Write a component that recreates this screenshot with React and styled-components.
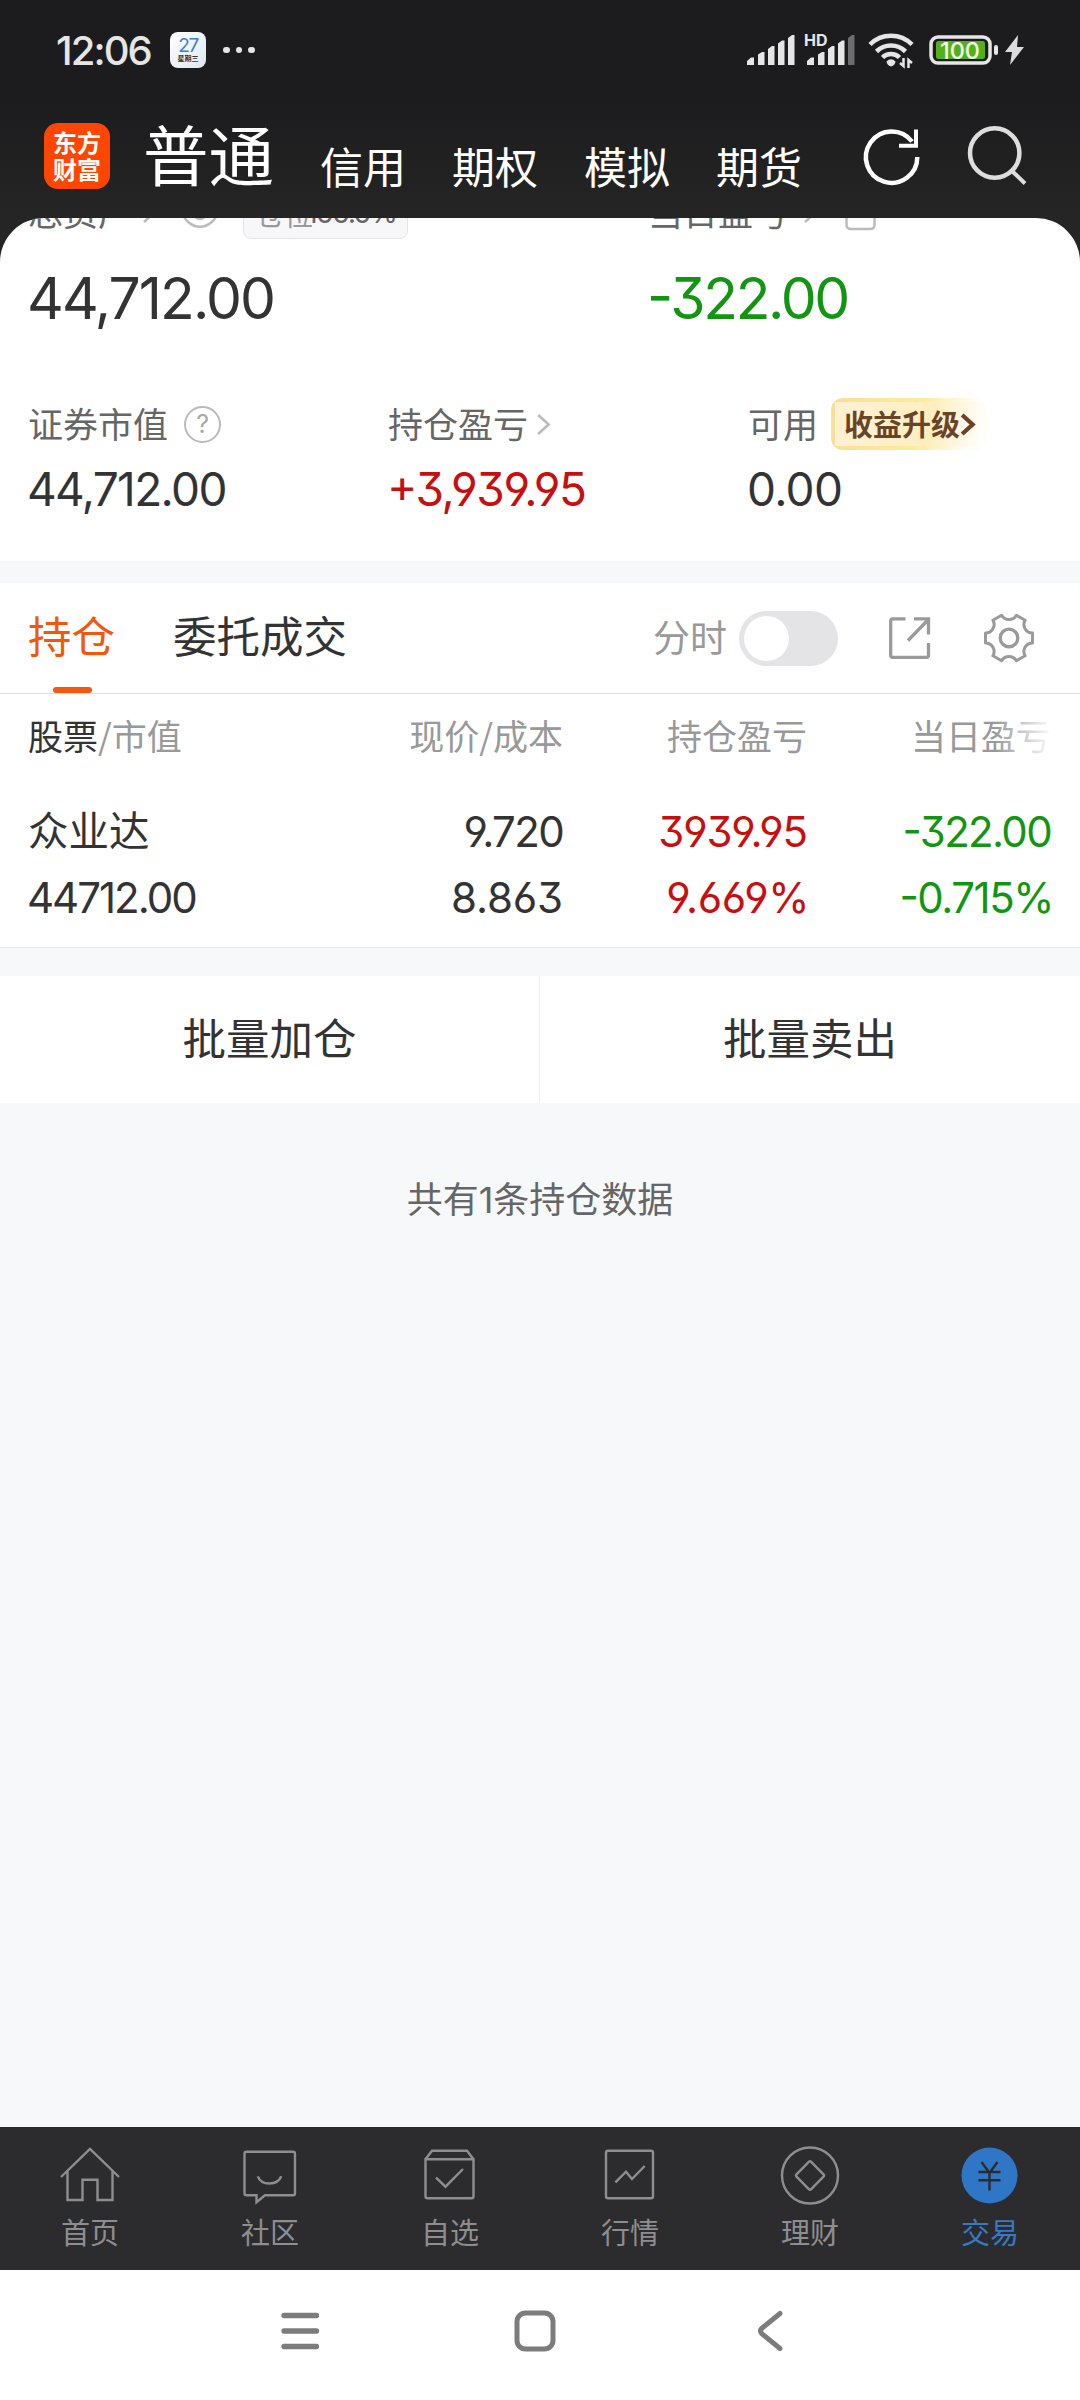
import React from "react";
import styled, { createGlobalStyle } from "styled-components";

const RED = "#c80f0f";
const GREEN = "#129612";

const GlobalStyle = createGlobalStyle`
  * {
    box-sizing: border-box;
  }
  body {
    margin: 0;
    background: #f7f8fa;
    font-family: "Noto Sans CJK SC", sans-serif;
    color: #333;
  }
  svg {
    display: block;
    flex: none;
    overflow: visible;
  }
`;

const StatusIcons = () => (
  <StatusRight>
    <svg width="48" height="36" fill="#e6e6e6">
      <path d="M0 33v-4l4-3.500h3v7.500zM11 33V22.500l4-2.500h2.500v13zM21 33V17l4-3h2.500v19zM31 33V11.500l4-3h2.500V33zM41 33V6l4-3h2.500v30z" />
    </svg>
    <svg width="48" height="36" fill="#e6e6e6">
      <path d="M0 33v-4l4-3.500h3v7.500zM11 33V22.500l4-2.500h2.500v13zM21 33V17l4-3h2.500v19zM31 33V11.500l4-3h2.500V33z" />
      <path fill="#6d6d6e" d="M41 33V6l4-3h2.500v30z" />
      <text x="-3" y="13.500" fontFamily="Inter" fontSize="16" fontWeight="700">
        HD
      </text>
    </svg>
    <svg width="46" height="36" fill="none" stroke="#e6e6e6" strokeWidth="4.600">
      <path d="M2 12.500a29.500 29.500 0 0 1 42 0M8.500 19.500a20.500 20.500 0 0 1 29 0M14.500 25.500a12 12 0 0 1 17 0" />
      <path d="M18.500 29.500q4.500-4.500 9 0q-.5 4-4.500 5q-4-1-4.500-5z" fill="#e6e6e6" stroke="none" />
      <path d="M35.500 26v8l-3.500-3M40.500 36v-8l3.500 3" strokeWidth="2.500" />
    </svg>
    <svg width="70" height="32">
      <rect x="2" y="3" width="59" height="26" rx="7" fill="none" stroke="#e6e6e6" strokeWidth="3.500" />
      <rect x="7" y="7" width="49" height="18" rx="2.500" fill="#52b01c" />
      <text x="31" y="24.500" fill="#f2fbe8" fontFamily="Inter" fontSize="23.500" fontWeight="500" textAnchor="middle" textLength="40">
        100
      </text>
      <rect x="65" y="11" width="4" height="10" rx="2" fill="#e6e6e6" />
    </svg>
    <svg width="19" height="32" fill="#dcdcdc">
      <path d="M13 1L0 18h7L5 31L19 13h-7z" />
    </svg>
  </StatusRight>
);

const ArrowRight = ({ color = "#bbb", size = 20, width = 2.5 }) => (
  <svg width={size * 0.8} height={size} viewBox="0 0 16 20" fill="none" stroke={color} strokeWidth={width}>
    <path d="M3 1l10 9l-10 9" />
  </svg>
);

const navItems = [
  {
    title: "首页",
    icon: <path d="M3 34L32 6l29 28M9.500 28v29h15V36.700h15V57h15V28" />,
  },
  {
    title: "社区",
    icon: (
      <>
        <path d="M8.500 8.700h46.500a2 2 0 0 1 2 2v39.500a2 2 0 0 1-2 2H27l-8.500 7v-7H8.500a2 2 0 0 1-2-2V10.700a2 2 0 0 1 2-2z" />
        <path d="M19.800 33.300c3.500 9.500 19.700 9.500 23.500 0" />
      </>
    ),
  },
  {
    title: "自选",
    icon: (
      <>
        <path d="M7.500 16.300L14 7.700h35l6.500 8.600M7.500 16.300h48v37a2 2 0 0 1-2 2h-44a2 2 0 0 1-2-2z" />
        <path d="M18 34.700l9.500 9L45 26" />
      </>
    ),
  },
  {
    title: "行情",
    icon: (
      <>
        <rect x="8" y="7.800" width="47" height="47.500" rx="2" />
        <path d="M17.400 39.300L28 28.700l6 7.300L46.700 23" />
      </>
    ),
  },
  {
    title: "理财",
    icon: (
      <>
        <circle cx="32" cy="32.500" r="28" />
        <path d="M30.800 18.800q1.200-1.200 2.400 0l12.300 12.500q1.200 1.200 0 2.400l-12.300 12.500q-1.200 1.200-2.400 0L18.500 33.700q-1.200-1.200 0-2.400z" />
      </>
    ),
  },
  {
    title: "交易",
    active: true,
    icon: (
      <>
        <circle cx="31.500" cy="32.500" r="28" fill="#2f76c6" stroke="none" />
        <path d="M23.500 19l8 11l8-11M20.500 29h22M20.500 37.300h22M31.500 29v18.500" stroke="#2c2c2e" />
      </>
    ),
  },
];

const App = () => {
  return (
    <Page>
      <GlobalStyle />
      <Top>
        <StatusBar>
          <Time>12:06</Time>
          <Calendar>
            <CalendarDay>27</CalendarDay>
            <CalendarWeek>星期三</CalendarWeek>
          </Calendar>
          <Dots>
            <i />
            <i />
            <i />
          </Dots>
          <StatusIcons />
        </StatusBar>
        <Header>
          <Logo>
            <span>东方</span>
            <span>财富</span>
          </Logo>
          <AccountTab $active>普通</AccountTab>
          {["信用", "期权", "模拟", "期货"].map((name) => (
            <AccountTab key={name}>{name}</AccountTab>
          ))}
          <HeaderActions>
            <svg width="58" height="60" fill="none" stroke="#fff" strokeWidth="4.500">
              <path d="M54.300 31A25.700 25.700 0 1 1 49 15.500" />
              <path d="M53 3.500v18M36 19.800h19" strokeWidth="4" />
            </svg>
            <svg width="60" height="60" fill="none" stroke="#dedede" strokeWidth="4.500">
              <circle cx="28.700" cy="27" r="24.700" />
              <path d="M45.500 44.500l13.500 13" strokeWidth="4" />
            </svg>
          </HeaderActions>
        </Header>
      </Top>

      <CardBackdrop>
        <AccountCard>
          <TitleRow>
            <TitleCell>
              <Label>总资产</Label>
              <TitleArrow>
                <ArrowRight />
              </TitleArrow>
              <svg width="36" height="28" fill="none" stroke="#bbb" strokeWidth="2.500">
                <path d="M0 14C5-5 31-5 36 14C31 35 5 35 0 14z" />
                <circle cx="18" cy="16" r="6" />
              </svg>
              <PositionTag>
                <span>仓位</span>
                <TagNumber>100.0%</TagNumber>
              </PositionTag>
            </TitleCell>
            <TitleCell>
              <Label>当日盈亏</Label>
              <ProfitArrow>
                <ArrowRight />
              </ProfitArrow>
              <svg width="31" height="36" fill="none" stroke="#bbb" strokeWidth="2.500">
                <rect x="1.500" y="8" width="28" height="28" rx="4" />
              </svg>
            </TitleCell>
          </TitleRow>
          <TotalRow>
            <Total $track={-0.034}>44,712.00</Total>
            <Total $track={-0.041} $color={GREEN}>
              -322.00
            </Total>
          </TotalRow>
          <Stats>
            <Stat>
              <StatTitle>
                <Label>证券市值</Label>
                <Help>?</Help>
              </StatTitle>
              <StatValue $track={-0.035}>44,712.00</StatValue>
            </Stat>
            <Stat>
              <StatTitle>
                <Label>持仓盈亏</Label>
                <StatArrow>
                  <ArrowRight size={21} />
                </StatArrow>
              </StatTitle>
              <StatValue $track={-0.031} $color={RED}>
                +3,939.95
              </StatValue>
            </Stat>
            <Stat>
              <StatTitle>
                <Label>可用</Label>
                <Upgrade>
                  收益升级
                  <ArrowRight color="#6b4428" size={21} width={4} />
                </Upgrade>
              </StatTitle>
              <StatValue $track={-0.015}>0.00</StatValue>
            </Stat>
          </Stats>
        </AccountCard>
      </CardBackdrop>

      <TabBar>
        <Tab $active>持仓</Tab>
        <Tab>委托成交</Tab>
        <TabTools>
          <ToolLabel>分时</ToolLabel>
          <Toggle>
            <Knob />
          </Toggle>
          <svg width="42" height="42" fill="none" stroke="#9a9a9a" strokeWidth="3.300">
            <path d="M16.500 1.800H3.700a2 2 0 0 0-2 2v34.500a2 2 0 0 0 2 2h33.800a2 2 0 0 0 2-2V26M25 1.800h14.500V17.500M19 23.500L39 3" />
          </svg>
          <svg width="50" height="50" fill="none" stroke="#9a9a9a" strokeWidth="3" strokeLinejoin="round">
            <path d="M48.500 20v10A8.500 8.500 0 0 0 41.100 42.800L32.400 47.800A8.500 8.500 0 0 0 17.600 47.800L8.900 42.800A8.500 8.500 0 0 0 1.500 30V20A8.500 8.500 0 0 0 8.900 7.200L17.600 2.200A8.500 8.500 0 0 0 32.400 2.200L41.100 7.200A8.500 8.500 0 0 0 48.500 20z" />
            <circle cx="25" cy="25" r="8.800" strokeWidth="3.300" />
          </svg>
        </TabTools>
      </TabBar>

      <Holdings>
        <HeadRow>
          <HeadCell>
            <b>股票</b>/市值
          </HeadCell>
          <HeadCell>现价/成本</HeadCell>
          <HeadCell>持仓盈亏</HeadCell>
          <HeadCell $fade>当日盈亏</HeadCell>
        </HeadRow>
        <Row>
          <StockName>众业达</StockName>
          <Cell $track={-0.039}>9.720</Cell>
          <Cell $color={RED}>3939.95</Cell>
          <Cell $track={-0.04} $color={GREEN}>
            -322.00
          </Cell>
        </Row>
        <Row>
          <Cell $track={-0.048}>44712.00</Cell>
          <Cell $track={-0.003}>8.863</Cell>
          <Cell $percent $track={-0.01} $color={RED}>
            9.669%
          </Cell>
          <Cell $percent $track={-0.035} $color={GREEN}>
            -0.715%
          </Cell>
        </Row>
      </Holdings>

      <BatchRow>
        <BatchButton>批量加仓</BatchButton>
        <BatchButton>批量卖出</BatchButton>
      </BatchRow>
      <Summary>
        共有<span>1</span>条持仓数据
      </Summary>

      <BottomNav>
        {navItems.map((item) => (
          <NavItem key={item.title} $active={item.active}>
            <svg width="64" height="64" fill="none" stroke="#8e8e91" strokeWidth="2.400">
              {item.icon}
            </svg>
            {item.title}
          </NavItem>
        ))}
      </BottomNav>
      <SystemBar>
        <svg width="40" height="40" stroke="#7c7c7c" strokeWidth="5.300" strokeLinecap="round">
          <path d="M4 4.500h32.500M4 20h32.500M4 35.500h32.500" />
        </svg>
        <svg width="42" height="42" fill="none" stroke="#7c7c7c" strokeWidth="5">
          <rect x="3" y="3" width="36" height="36" rx="8.500" />
        </svg>
        <svg width="26" height="42" fill="none" stroke="#7c7c7c" strokeWidth="5" strokeLinecap="round">
          <path d="M23 3.500L4.800 18.300q-2.500 2.700 0 5.400L23 38.500" />
        </svg>
      </SystemBar>
    </Page>
  );
};

const Page = styled.div`
  width: 1080px;
  height: 2400px;
  display: flex;
  flex-direction: column;
  overflow: hidden;
`;

const Top = styled.div`
  height: 218px;
  background: linear-gradient(#1c1c1e 45%, #252525);
`;

const StatusBar = styled.div`
  height: 100px;
  padding: 0 56px;
  display: flex;
  align-items: center;
`;

const Time = styled.div`
  width: 114px;
  font-family: Inter, sans-serif;
  font-size: 40px;
  font-weight: 500;
  letter-spacing: -1.9px;
  color: #e6e6e6;
`;

const Calendar = styled.div`
  width: 36px;
  height: 36px;
  border-radius: 8px;
  background: linear-gradient(135deg, #fff, #dde8f3);
  display: flex;
  flex-direction: column;
  align-items: center;
  padding-top: 5px;
`;

const CalendarDay = styled.div`
  font-family: Inter, sans-serif;
  font-size: 19px;
  line-height: 18px;
  letter-spacing: -1.5px;
  color: #3c80cc;
`;

const CalendarWeek = styled.div`
  font-size: 7px;
  line-height: 7px;
  font-weight: 700;
  color: #333;
`;

const Dots = styled.div`
  display: flex;
  gap: 6px;
  margin-left: 17px;
  i {
    width: 6.500px;
    height: 6.500px;
    border-radius: 50%;
    background: #e6e6e6;
  }
`;

const StatusRight = styled.div`
  margin-left: auto;
  display: flex;
  align-items: center;
  svg:nth-child(2) {
    margin-left: 12px;
  }
  svg:nth-child(3) {
    margin-left: 13px;
  }
  svg:nth-child(4) {
    margin-left: 15px;
  }
  svg:nth-child(5) {
    margin-left: 6px;
  }
`;

const Header = styled.div`
  height: 118px;
  padding: 0 54px 6px 44px;
  display: flex;
  align-items: center;
`;

const Logo = styled.div`
  width: 66px;
  height: 66px;
  border-radius: 14px;
  margin-right: -13px;
  padding-top: 5px;
  background: #ff4600;
  color: #fff;
  font-size: 24px;
  font-weight: 700;
  line-height: 27px;
  display: flex;
  flex-direction: column;
  align-items: center;
`;

const AccountTab = styled.div`
  color: #fff;
  font-size: ${(p) => (p.$active ? "65.5px" : "43px")};
  line-height: 70px;
  margin-left: 46px;
  margin-top: ${(p) => (p.$active ? "-6px" : "17px")};
  white-space: nowrap;
`;

const HeaderActions = styled.div`
  margin-left: auto;
  display: flex;
  gap: 45px;
`;

const CardBackdrop = styled.div`
  height: 365px;
  background: linear-gradient(#252525 60px, #f7f8fa 60px);
`;

const AccountCard = styled.div`
  height: 343px;
  border-radius: 44px 44px 0 0;
  background: #fff;
  overflow: hidden;
  display: flex;
  flex-direction: column;
  padding-left: 28px;
`;

// scrolled partly under the header
const TitleRow = styled.div`
  flex: none;
  height: 50px;
  margin-top: -29px;
  display: grid;
  grid-template-columns: 620px 1fr;
`;

const TitleCell = styled.div`
  height: 50px;
  display: flex;
  align-items: center;
  padding-bottom: 7px;
`;

const Label = styled.div`
  font-size: 35px;
  line-height: 43px;
  color: #666;
  white-space: nowrap;
`;

const TitleArrow = styled.div`
  margin: 4px 25px 0 8px;
`;

const ProfitArrow = styled.div`
  margin: 4px 27px 0 14px;
`;

const PositionTag = styled.div`
  width: 165px;
  height: 46px;
  margin: 0 0 -7px 25px;
  align-self: flex-end;
  border: 1px solid #e4e4e8;
  border-radius: 8px;
  background: #f7f7fa;
  color: #999;
  display: flex;
  justify-content: center;
  align-items: center;
  font-size: 29px;
  padding-bottom: 6px;
`;

const TagNumber = styled.span`
  font-family: Inter, sans-serif;
  font-size: 29px;
  line-height: 34px;
  letter-spacing: -2px;
  color: #666;
  margin-left: -7px;
`;

const TotalRow = styled.div`
  margin-top: 30px;
  display: grid;
  grid-template-columns: 620px 1fr;
`;

const Digits = styled.div`
  font-family: Inter, sans-serif;
  font-feature-settings: "cv03", "cv04", "cv09", "case";
  letter-spacing: ${(p) => p.$track ?? -0.027}em;
  color: ${(p) => p.$color || "#333"};
  white-space: nowrap;
`;

const Total = styled(Digits)`
  margin-left: -1px;
  font-size: 57px;
  line-height: 60px;
`;

const Stats = styled.div`
  margin-top: 66px;
  display: flex;
`;

const Stat = styled.div`
  flex: 0 0 360px;
`;

const StatTitle = styled.div`
  height: 54px;
  display: flex;
  align-items: center;
`;

const StatValue = styled(Digits)`
  margin-top: 10px;
  margin-left: -1px;
  font-size: 46px;
  line-height: 61px;
`;

const Help = styled.div`
  width: 37px;
  height: 37px;
  margin: 4px 0 0 16px;
  border: 2.500px solid #bbb;
  border-radius: 50%;
  font-family: Inter, sans-serif;
  font-size: 25px;
  line-height: 33px;
  text-align: center;
  color: #aaa;
`;

const StatArrow = styled.div`
  margin: 4px 0 0 7px;
`;

const Upgrade = styled.div`
  width: 156px;
  height: 52px;
  margin: 4px 0 0 13px;
  padding: 0 0 3px 13px;
  border-radius: 12px;
  background:
    linear-gradient(100deg, #fff1cf 20%, #ffeebf 65%, #fff 100%) 4px 4px / 148px 44px no-repeat,
    linear-gradient(100deg, #f8df98, #fdeb9c 55%, #fffdf6 88%);
  display: flex;
  align-items: center;
  font-size: 29px;
  font-weight: 700;
  color: #6b4428;
  white-space: nowrap;
  svg {
    margin-top: 3px;
    margin-left: -1px;
  }
`;

const TabBar = styled.div`
  height: 111px;
  border-bottom: 1px solid #dedede;
  background: #fff;
  display: flex;
  align-items: center;
  padding: 0 46px 0 28px;
`;

const Tab = styled.div`
  position: relative;
  height: 110px;
  margin-right: 58px;
  font-size: 43.5px;
  line-height: 104px;
  color: ${(p) => (p.$active ? "#f0590c" : "#333")};
  &::after {
    content: "";
    display: ${(p) => (p.$active ? "block" : "none")};
    position: absolute;
    left: 25px;
    bottom: 0;
    width: 39px;
    height: 6px;
    border-radius: 3px;
    background: #f5590d;
  }
`;

const TabTools = styled.div`
  margin-left: auto;
  display: flex;
  align-items: center;
  svg:first-of-type {
    margin: 0 53px 0 51px;
  }
`;

const ToolLabel = styled.div`
  font-size: 37px;
  line-height: 50px;
  margin-top: -4px;
  color: #999;
`;

const Toggle = styled.div`
  width: 99px;
  height: 55px;
  margin-left: 12px;
  padding: 5px;
  border-radius: 28px;
  background: #e4e4e6;
`;

const Knob = styled.div`
  width: 45px;
  height: 45px;
  border-radius: 50%;
  background: #fff;
`;

const Holdings = styled.div`
  height: 254px;
  border-bottom: 1px solid #ebebeb;
  background: #fff;
`;

const Row = styled.div`
  height: 66px;
  padding-left: 28px;
  display: grid;
  grid-template-columns: 291px 244px 244px 244px;
  align-items: center;
`;

const HeadRow = styled(Row)`
  height: 82px;
  margin-bottom: 22px;
`;

const HeadCell = styled.div`
  position: relative;
  font-size: 35px;
  line-height: 50px;
  color: #999;
  white-space: nowrap;
  text-align: right;
  &:first-child {
    text-align: left;
  }
  b {
    font-weight: 400;
    color: #333;
  }
  &::after {
    content: "";
    display: ${(p) => (p.$fade ? "block" : "none")};
    position: absolute;
    top: 0;
    right: -2px;
    width: 58px;
    height: 50px;
    background: linear-gradient(to right, rgba(255, 255, 255, 0), #fff);
  }
`;

const StockName = styled.div`
  font-size: 40.5px;
  line-height: 60px;
  margin-top: -5px;
`;

const Cell = styled(Digits)`
  font-size: 42px;
  text-align: right;
  margin-right: ${(p) => (p.$percent ? "-2px" : 0)};
  &:first-child {
    margin-left: -1px;
    text-align: left;
  }
`;

const BatchRow = styled.div`
  margin-top: 28px;
  height: 127px;
  display: grid;
  grid-template-columns: 539px 541px;
  background: #fff;
`;

const BatchButton = styled.div`
  font-size: 43.5px;
  line-height: 121px;
  text-align: center;
  & + & {
    border-left: 1px solid #efefef;
  }
`;

const Summary = styled.div`
  margin-top: 69px;
  font-size: 36px;
  line-height: 50px;
  text-align: center;
  color: #666;
  span {
    font-family: Inter, sans-serif;
  }
`;

const BottomNav = styled.div`
  margin-top: auto;
  height: 143px;
  padding-top: 16px;
  background: #2c2c2e;
  display: grid;
  grid-template-columns: repeat(6, 180px);
`;

const NavItem = styled.div`
  display: flex;
  flex-direction: column;
  align-items: center;
  gap: 4px;
  font-size: 29px;
  line-height: 40px;
  color: ${(p) => (p.$active ? "#3879c6" : "#8e8e91")};
`;

const SystemBar = styled.div`
  height: 130px;
  padding: 0 18px 8px 0;
  background: #fff;
  display: flex;
  justify-content: center;
  align-items: center;
  gap: 194px;
  svg:last-child {
    margin-left: 7px;
  }
`;

export default App;
